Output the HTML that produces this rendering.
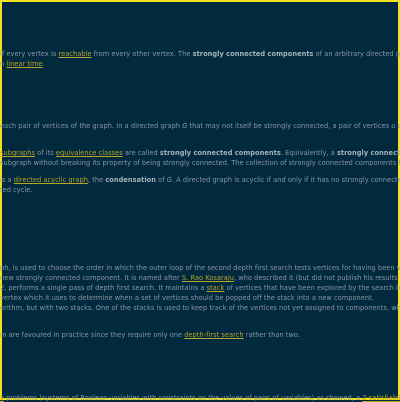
<html><head><style>
body{margin:0;width:400px;height:400px;overflow:hidden;background:#022a3f;}
.f{position:absolute;left:0;top:0;width:396px;height:396px;border:2px solid #f2e41a;}
.l{position:absolute;left:0;white-space:nowrap;font:6.6px "DejaVu Sans",sans-serif;color:#8797a2;letter-spacing:0.05px}
a{color:#b8a426;text-decoration:underline}
b{color:#a5b2ba}
</style></head><body><div class="f"></div>
<div class="l" style="top:50px">if every vertex is <a>reachable</a> from every other vertex. The <b>strongly connected components</b> of an arbitrary directed graph</div>
<div class="l" style="top:60px">n <a>linear time</a>.</div>
<div class="l" style="top:122px">each pair of vertices of the graph. In a directed graph <i>G</i> that may not itself be strongly connected, a pair of vertices <i>u</i> a</div>
<div class="l" style="top:149px"><a>subgraphs</a> of its <a>equivalence classes</a> are called <b>strongly connected components</b>. Equivalently, a <b>strongly connected</b></div>
<div class="l" style="top:159px">subgraph without breaking its property of being strongly connected. The collection of strongly connected components fo</div>
<div class="l" style="top:176px">is a <a>directed acyclic graph</a>, the <b>condensation</b> of <i>G</i>. A directed graph is acyclic if and only if it has no strongly connecte</div>
<div class="l" style="top:186px">ted cycle.</div>
<div class="l" style="top:264px">ph, is used to choose the order in which the outer loop of the second depth first search tests vertices for having been vi</div>
<div class="l" style="top:274px">new strongly connected component. It is named after <a>S. Rao Kosaraju</a>, who described it (but did not publish his results</div>
<div class="l" style="top:284px">2, performs a single pass of depth first search. It maintains a <a>stack</a> of vertices that have been explored by the search but</div>
<div class="l" style="top:294px">vertex which it uses to determine when a set of vertices should be popped off the stack into a new component.</div>
<div class="l" style="top:304px">orithm, but with two stacks. One of the stacks is used to keep track of the vertices not yet assigned to components, wh</div>
<div class="l" style="top:331px">m are favoured in practice since they require only one <a>depth-first search</a> rather than two.</div>
<div class="l" style="top:394px"><a>y</a> problems (systems of Boolean variables with constraints on the values of pairs of variables) as showed, a <a>2-satisfiability</a></div>
</body></html>
